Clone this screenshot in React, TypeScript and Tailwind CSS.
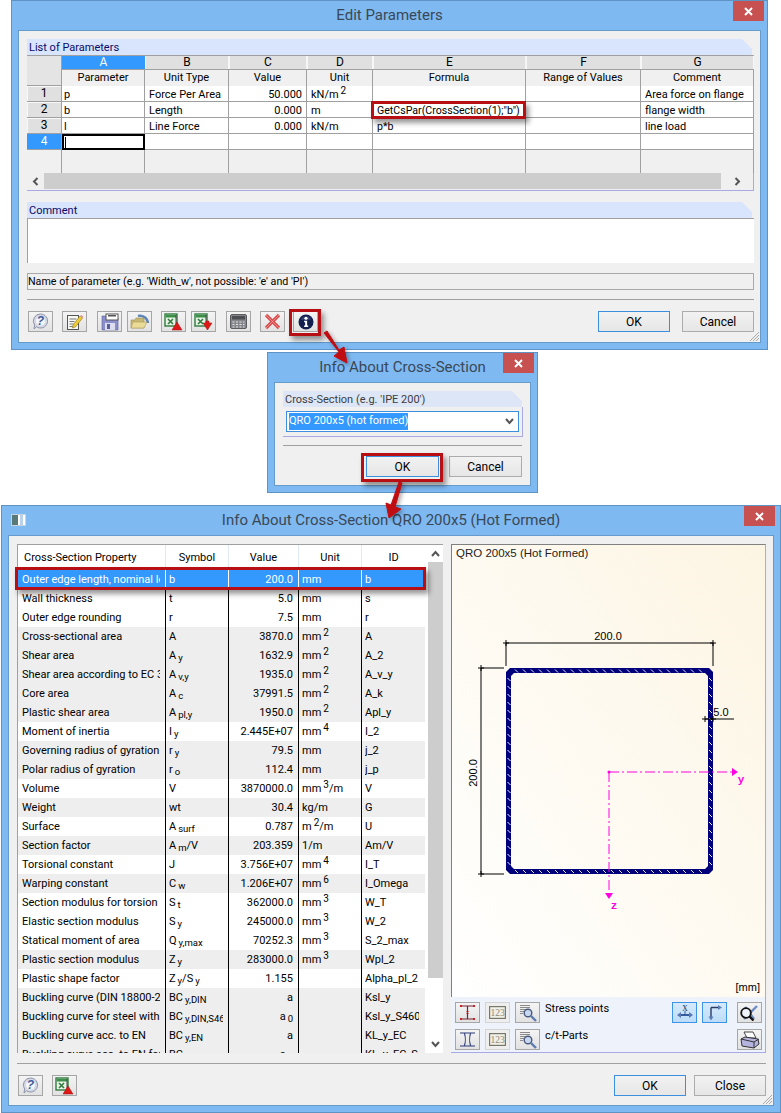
import React from 'react';

const Sb = ({ children }: { children: React.ReactNode }) => (
  <span className="ml-[2px] text-[9.5px] leading-[0] align-[-2px]">{children}</span>
);
const Sp = ({ children }: { children: React.ReactNode }) => (
  <span className="ml-[2px] text-[10px] leading-[0] align-[4px]">{children}</span>
);

const ToolIcon = ({ name }: { name: string }) => {
  switch (name) {
    case 'help':
      return (
        <svg width="17" height="17" viewBox="0 0 17 17">
          <path d="M8.5 1a7 7 0 1 1-4 12.7L2 16l.6-4A7 7 0 0 1 8.5 1z" fill="#d5d9e6" stroke="#8d93a8" />
          <circle cx="8.5" cy="8" r="4.6" fill="#f4f5fa" />
          <text x="8.5" y="12" textAnchor="middle" fontSize="12" fontWeight="700" fontStyle="italic" fill="#3d5c9c" fontFamily="Liberation Sans">?</text>
        </svg>
      );
    case 'edit':
      return (
        <svg width="18" height="18" viewBox="0 0 18 18">
          <rect x="1.5" y="2.5" width="11" height="14" fill="#f8f8f4" stroke="#555" />
          <path d="M3.500 6h7M3.500 8.500h5M3.500 11h4M3.500 13.500h6" stroke="#777" />
          <path d="M7 12 14 3l2.500 2-7 9-3 1z" fill="#f0cd30" stroke="#8a7420" strokeWidth=".6" />
          <path d="M14 3l2.500 2 1-1.500L15.500 2z" fill="#e49aa0" />
        </svg>
      );
    case 'save':
      return (
        <svg width="18" height="18" viewBox="0 0 18 18">
          <path d="M1 3h14l2 2v12H1z" fill="#8a90cc" stroke="#5a5f9a" strokeWidth=".6" />
          <rect x="5" y="1" width="12" height="6" fill="#fff" stroke="#555" />
          <rect x="7" y="2" width="8" height="1.500" fill="#555" />
          <rect x="4" y="10" width="10" height="7" fill="#dcdef0" />
          <rect x="6" y="11" width="3" height="5" fill="#5a5f9a" />
        </svg>
      );
    case 'open':
      return (
        <svg width="20" height="18" viewBox="0 0 20 18">
          <path d="M8 3a8 8 0 0 1 10 7" fill="none" stroke="#5f86b8" strokeWidth="2.500" />
          <path d="M1 7h4l1-2h8v10H1z" fill="#c9b874" stroke="#9d9050" strokeWidth=".6" />
          <path d="M1 15 3 9h14l-3 6z" fill="#eadb96" stroke="#a89a5a" strokeWidth=".6" />
        </svg>
      );
    case 'xlsup':
    case 'xlsdown':
      return (
        <svg width="19" height="18" viewBox="0 0 19 18">
          <rect x="1" y="1" width="12" height="12" fill="#e8f2e6" stroke="#2f7d3d" strokeWidth="1.400" />
          <rect x="2" y="2" width="10" height="2.500" fill="#3b8f48" />
          <path d="M4 6l5 5M9 6l-5 5" stroke="#2f7d3d" strokeWidth="1.600" />
          <path d="M12 2v12" stroke="#444" />
          {name === 'xlsup' ? (
            <path d="M13 9l5 8H8z" fill="#e01818" stroke="#9a1010" strokeWidth=".5" />
          ) : (
            <path d="M9 10h3V8h3v2h3l-4.500 7z" fill="#e01818" stroke="#9a1010" strokeWidth=".5" />
          )}
        </svg>
      );
    case 'calc':
      return (
        <svg width="17" height="15" viewBox="0 0 17 15">
          <rect x=".5" y=".5" width="16" height="14" rx="1.500" fill="#85878c" stroke="#5a5c60" />
          <rect x="2" y="2" width="13" height="3.500" fill="#4c4e54" />
          <path d="M2.500 8h2M6 8h2M9.500 8h2M13 8h1.500M2.500 10.500h2M6 10.500h2M9.500 10.500h2M13 10.500h1.500M2.500 13h2M6 13h2M9.500 13h2M13 13h1.500" stroke="#e4e4e4" strokeWidth="1.200" />
        </svg>
      );
    case 'del':
      return (
        <svg width="17" height="17" viewBox="0 0 17 17">
          <path d="M2 2l13 13M15 2 2 15" stroke="#dc4a4a" strokeWidth="3.200" />
          <path d="M2 2l13 13M15 2 2 15" stroke="#f4a0a0" strokeWidth=".8" />
        </svg>
      );
    case 'info':
      return (
        <svg width="16" height="16" viewBox="0 0 17 17">
          <circle cx="8.500" cy="8.500" r="8" fill="#141f4e" />
          <path d="M3 6a6 6 0 0 1 11 0z" fill="#4a5a8e" opacity=".55" />
          <circle cx="8.500" cy="4.500" r="1.700" fill="#fff" />
          <path d="M6.500 7.200h3.200v5h1.100v1.500H6.500v-1.500h1.100V8.700H6.500z" fill="#fff" />
        </svg>
      );
    case 'stress':
      return (
        <svg width="17" height="17" viewBox="0 0 17 17">
          <path d="M2 2h13M2 15h13M8.500 2v13" stroke="#7a2030" strokeWidth="1.200" />
          <path d="M1 1l2 2M3 1 1 3M14 1l2 2M16 1l-2 2M1 14l2 2M3 14l-2 2M14 14l2 2M16 14l-2 2M7.500 7.500l2 2M9.500 7.500l-2 2" stroke="#d02020" />
        </svg>
      );
    case 'num':
      return (
        <svg width="17" height="13" viewBox="0 0 17 13">
          <rect x=".5" y=".5" width="16" height="12" fill="#f0f0e8" stroke="#77776a" strokeWidth="1.400" />
          <text x="8.500" y="10" textAnchor="middle" fontSize="9.500" fill="#8a8a7a" fontFamily="Liberation Serif">123</text>
        </svg>
      );
    case 'section':
      return (
        <svg width="17" height="17" viewBox="0 0 17 17">
          <path d="M1 2h15M1 15h15M5.500 2.500c1 3 1 9 0 12M11.500 2.500c-1 3-1 9 0 12" fill="none" stroke="#2c3a78" strokeWidth="1.100" />
        </svg>
      );
    case 'mag':
      return (
        <svg width="18" height="18" viewBox="0 0 18 18">
          <path d="M1 1.500h10M1 3.500h10M1 5.500h6M1 7.500h4M1 9.500h3" stroke="#8a8a8a" />
          <circle cx="9" cy="9" r="3.800" fill="#c8d8f0" stroke="#4a5a7c" strokeWidth="1.400" />
          <path d="m12 12 5 5" stroke="#5a7cb0" strokeWidth="2.400" />
        </svg>
      );
    case 'xaxis':
      return (
        <svg width="18" height="17" viewBox="0 0 18 17">
          <text x="9" y="6.500" textAnchor="middle" fontSize="7.500" fill="#223" fontFamily="Liberation Serif">X</text>
          <path d="M2 11h14" stroke="#345a9c" strokeWidth="2" />
          <path d="M9 7v3" stroke="#345a9c" />
          <path d="M1 11l4-3v6zM17 11l-4-3v6z" fill="#5c7cb8" />
        </svg>
      );
    case 'axes':
      return (
        <svg width="17" height="17" viewBox="0 0 17 17">
          <path d="M5 3.500h9M5 3.500v11" stroke="#2c3a62" strokeWidth="1.400" />
          <path d="M16 3.500l-4-2.500v5zM5 16.500l-2.500-4h5z" fill="#5c7cb8" />
        </svg>
      );
    case 'view':
      return (
        <svg width="21" height="18" viewBox="0 0 21 18">
          <path d="M5 15 18 2M15 15 6 3" stroke="#6d8bc4" strokeWidth="2.400" />
          <circle cx="7" cy="9" r="4.800" fill="#eef2fa" stroke="#111" strokeWidth="1.800" />
          <path d="m10.500 12.500 4 4" stroke="#111" strokeWidth="2.400" />
        </svg>
      );
    case 'print':
      return (
        <svg width="20" height="18" viewBox="0 0 20 18">
          <path d="M4 1h9l3 6H7z" fill="#fff" stroke="#444" />
          <path d="M1 8l4-2 13 2 1 5-5 4-12-2z" fill="#b4b4de" stroke="#333" />
          <path d="M1 8l13 3v6M14 11l5-3" fill="none" stroke="#333" />
        </svg>
      );
    default:
      return null;
  }
};

const ToolBtn = ({ icon, active, dim }: { icon: string; active?: boolean; dim?: boolean }) => (
  <div
    className={
      active
        ? 'flex h-[21px] w-[25px] shrink-0 items-center justify-center border border-[#3d94e6] bg-gradient-to-b from-[#d6eafc] to-[#bcdcf8]'
        : dim
          ? 'flex h-[21px] w-[25px] shrink-0 items-center justify-center border border-[#d4d4d4] bg-[#eeeeee]'
          : 'flex h-[21px] w-[25px] shrink-0 items-center justify-center border border-[#a6a6a6] bg-gradient-to-b from-[#f4f4f4] to-[#e2e2e2]'
    }
  >
    <ToolIcon name={icon} />
  </div>
);

const DlgBtn = ({ label, primary, w }: { label: string; primary?: boolean; w: string }) => (
  <div
    className={
      (primary ? 'border-[#3c8fdf] ' : 'border-[#acacac] ') +
      w +
      ' flex h-[21px] items-center justify-center border bg-gradient-to-b from-[#f2f2f2] to-[#e6e6e6] text-[12px] text-black'
    }
  >
    {label}
  </div>
);

const Win = ({ title, className, children, icon, closeClass }: { title: string; className: string; children: React.ReactNode; icon?: boolean; closeClass?: string }) => (
  <div className={className + ' flex flex-col border border-[#5f93c4] bg-[#7eb9f2]'}>
    <div className="relative flex h-[29px] shrink-0 items-center justify-center text-[15px] text-[#3a4856]">
      {icon && (
        <div className="absolute left-[9px] top-[8px] flex h-[12px] w-[15px] border border-[#c8d4e0] bg-white">
          <div className="w-[6px] bg-[#5a7a7a]" />
          <div className="ml-[2px] w-[3px] bg-[#b8d0e8]" />
        </div>
      )}
      {title}
      <div className={(closeClass ?? 'right-[3px]') + ' absolute top-0 flex h-[20px] w-[31px] items-center justify-center bg-[#c75050]'}>
        <svg width="9" height="9" viewBox="0 0 9 9">
          <path d="M1 1l7 7M8 1 1 8" stroke="#fff" strokeWidth="2" />
        </svg>
      </div>
    </div>
    <div className="relative mx-[6px] mb-[6px] flex min-h-0 flex-1 flex-col border border-[#659ac9] bg-[#f0f0f0]">
      {children}
    </div>
  </div>
);

const Grip = () => (
  <svg className="absolute bottom-0 right-0" width="12" height="12" viewBox="0 0 12 12">
    <path d="M11 2 2 11M11 5l-6 6M11 8l-3 3" stroke="#a8a8a8" />
  </svg>
);

const paramColsClass = 'grid grid-cols-[35px_83px_84px_78px_66px_153px_115px_113px]';

const paramRows: { n: string; a: string; b: string; c: string; d: React.ReactNode; e: string; g: string }[] = [
  { n: '1', a: 'p', b: 'Force Per Area', c: '50.000', d: <>kN/m<Sp>2</Sp></>, e: '', g: 'Area force on flange' },
  { n: '2', a: 'b', b: 'Length', c: '0.000', d: 'm', e: 'GetCsPar(CrossSection(1);"b")', g: 'flange width' },
  { n: '3', a: 'l', b: 'Line Force', c: '0.000', d: 'kN/m', e: 'p*b', g: 'line load' },
];

const ParamTable = () => (
  <div className="relative">
    <div className={paramColsClass + ' h-[14px] border-t border-[#a0a0a0] bg-[#f0f0f0] text-center text-[12px] leading-[13px]'}>
      <div className="row-span-2 h-[30px] border-b border-r border-[#a0a0a0] bg-[#e4e4e4]" />
      <div className="bg-[#3399ff] text-white">A</div>
      {['B', 'C', 'D', 'E', 'F', 'G'].map((l) => (
        <div key={l} className="border-l border-r border-[#f6f6f6] bg-[#e0e0e0] text-black">{l}</div>
      ))}
    </div>
    <div className={paramColsClass + ' h-[17px] text-center leading-[16px]'}>
      <div />
      {['Parameter', 'Unit Type', 'Value', 'Unit', 'Formula', 'Range of Values', 'Comment'].map((l) => (
        <div key={l} className="border-b border-r border-t border-[#a0a0a0] bg-[#f0f0f0]">{l}</div>
      ))}
    </div>
    {paramRows.map((r) => (
      <div key={r.n} className={paramColsClass + ' h-[16px] grid-rows-[16px] whitespace-nowrap leading-[17px]'}>
        <div className="border-b border-r border-[#a0a0a0] bg-[#e0e0e0] text-center text-[12px] leading-[15px] shadow-[inset_1px_1px_0_#f8f8f8]">{r.n}</div>
        <div className="border-b border-r border-[#a0a0a0] bg-white pl-[2px]">{r.a}</div>
        <div className="border-b border-r border-[#a0a0a0] bg-white pl-[4px]">{r.b}</div>
        <div className="border-b border-r border-[#a0a0a0] bg-white pr-[4px] text-right">{r.c}</div>
        <div className="border-b border-r border-[#a0a0a0] bg-white pl-[4px]">{r.d}</div>
        <div className="border-b border-r border-[#a0a0a0] bg-white pl-[4px] text-[10.6px]">{r.e}</div>
        <div className="border-b border-r border-[#a0a0a0] bg-white" />
        <div className="border-b border-r border-[#a0a0a0] bg-white pl-[4px]">{r.g}</div>
      </div>
    ))}
    <div className={paramColsClass + ' h-[16px] grid-rows-[16px] leading-[15px]'}>
      <div className="border-b border-r border-[#a0a0a0] bg-[#3399ff] text-center text-[12px] text-white">4</div>
      <div className="flex items-center border-2 border-black bg-white pl-[1px]">
        <div className="h-[11px] w-[1px] bg-black" />
      </div>
      {[0, 1, 2, 3, 4, 5].map((i) => (
        <div key={i} className="border-b border-r border-[#a0a0a0] bg-white" />
      ))}
    </div>
    <div className={paramColsClass + ' h-[23px]'}>
      {[0, 1, 2, 3, 4, 5, 6, 7].map((i) => (
        <div key={i} className="border-r border-[#a0a0a0] bg-[#f0f0f0]" />
      ))}
    </div>
    <div className="flex h-[16px] items-stretch bg-[#f0f0f0]">
      <div className="flex w-[17px] items-center justify-center">
        <svg width="7" height="9" viewBox="0 0 7 9"><path d="M5.500 1 2 4.500 5.500 8" fill="none" stroke="#555" strokeWidth="2" /></svg>
      </div>
      <div className="w-[677px] bg-[#cdcdcd]" />
      <div className="flex flex-1 items-center justify-center">
        <svg width="7" height="9" viewBox="0 0 7 9"><path d="M1.500 1 5 4.500 1.500 8" fill="none" stroke="#555" strokeWidth="2" /></svg>
      </div>
    </div>
  </div>
);

const GroupHead = ({ label, dim }: { label: string; dim?: boolean }) => (
  <div
    className={
      (dim ? 'bg-[#dde6f6] text-[#3c3c3c] ' : 'bg-[#d8e5fc] text-[#0a0a6a] ') +
      "h-[16px] pl-[2px] leading-[17px] [clip-path:polygon(0_0,calc(100%-10px)_0,100%_10px,100%_100%,0_100%)]"
    }
  >
    {label}
  </div>
);

const EditParameters = () => (
  <Win title="Edit Parameters" className="ml-[11px] h-[350px] w-[757px] shrink-0">
    <div className="px-[8px] pt-[8px]">
      <GroupHead label="List of Parameters" />
      <div className="w-[727px] border-b border-r border-[#a9a9e6] pb-[1px]">
        <ParamTable />
      </div>
      <div className="mt-[11px]">
        <GroupHead label="Comment" />
        <div className="h-[45px] w-[727px] border-l border-t border-[#a0a0a0] bg-white" />
      </div>
      <div className="mt-[10px] h-[17px] w-[727px] border border-[#a8a8a8] text-[10.7px] leading-[16px]">
        Name of parameter (e.g. 'Width_w', not possible: 'e' and 'PI')
      </div>
      <div className="mt-[9px] h-px w-[727px] bg-[#a0a0a0]" />
      <div className="mt-[11px] flex w-[727px] items-center">
        <div className="ml-[1px] flex items-center">
          <ToolBtn icon="help" />
          <div className="ml-[9px]"><ToolBtn icon="edit" /></div>
          <div className="ml-[10px]"><ToolBtn icon="save" /></div>
          <div className="ml-[5px]"><ToolBtn icon="open" /></div>
          <div className="ml-[9px]"><ToolBtn icon="xlsup" /></div>
          <div className="ml-[5px]"><ToolBtn icon="xlsdown" /></div>
          <div className="ml-[10px]"><ToolBtn icon="calc" /></div>
          <div className="ml-[9px]"><ToolBtn icon="del" /></div>
          <div className="ml-[8px]"><ToolBtn icon="info" /></div>
        </div>
        <div className="ml-auto flex gap-[12px]">
          <DlgBtn label="OK" primary w="w-[72px]" />
          <DlgBtn label="Cancel" w="w-[72px]" />
        </div>
      </div>
    </div>
    <Grip />
  </Win>
);

const InfoSmall = () => (
  <Win title="Info About Cross-Section" className="ml-[267px] mt-[2px] h-[141px] w-[271px] shrink-0">
    <div className="px-[8px] pt-[8px]">
      <GroupHead label="Cross-Section (e.g. 'IPE 200')" dim />
      <div className="h-[30px] w-[240px] border-b border-r border-[#a9a9e6] pl-[3px] pt-[4px]">
        <div className="flex h-[21px] w-[233px] items-center border border-[#3c8fdf] bg-white pl-[2px]">
          <span className="bg-[#3399ff] text-white">QRO 200x5 (hot formed)</span>
          <svg className="ml-auto mr-[4px]" width="9" height="7" viewBox="0 0 9 7"><path d="M1 1l3.500 4L8 1" fill="none" stroke="#555" strokeWidth="2" /></svg>
        </div>
      </div>
      <div className="mt-[8px] h-px w-[239px] bg-[#a0a0a0]" />
      <div className="mt-[10px] flex w-[239px] justify-end gap-[10px]">
        <DlgBtn label="OK" primary w="w-[73px]" />
        <DlgBtn label="Cancel" w="w-[73px]" />
      </div>
    </div>
  </Win>
);

type PropRow = { p: string; s: React.ReactNode; v: React.ReactNode; u?: React.ReactNode; id: string };

const propRows: PropRow[] = [
  { p: 'Outer edge length, nominal length', s: 'b', v: '200.0', u: 'mm', id: 'b' },
  { p: 'Wall thickness', s: 't', v: '5.0', u: 'mm', id: 's' },
  { p: 'Outer edge rounding', s: 'r', v: '7.5', u: 'mm', id: 'r' },
  { p: 'Cross-sectional area', s: 'A', v: '3870.0', u: <>mm<Sp>2</Sp></>, id: 'A' },
  { p: 'Shear area', s: <>A<Sb>y</Sb></>, v: '1632.9', u: <>mm<Sp>2</Sp></>, id: 'A_2' },
  { p: 'Shear area according to EC 3', s: <>A<Sb>v,y</Sb></>, v: '1935.0', u: <>mm<Sp>2</Sp></>, id: 'A_v_y' },
  { p: 'Core area', s: <>A<Sb>c</Sb></>, v: '37991.5', u: <>mm<Sp>2</Sp></>, id: 'A_k' },
  { p: 'Plastic shear area', s: <>A<Sb>pl,y</Sb></>, v: '1950.0', u: <>mm<Sp>2</Sp></>, id: 'Apl_y' },
  { p: 'Moment of inertia', s: <>I<Sb>y</Sb></>, v: '2.445E+07', u: <>mm<Sp>4</Sp></>, id: 'I_2' },
  { p: 'Governing radius of gyration', s: <>r<Sb>y</Sb></>, v: '79.5', u: 'mm', id: 'j_2' },
  { p: 'Polar radius of gyration', s: <>r<Sb>o</Sb></>, v: '112.4', u: 'mm', id: 'j_p' },
  { p: 'Volume', s: 'V', v: '3870000.0', u: <>mm<Sp>3</Sp>/m</>, id: 'V' },
  { p: 'Weight', s: 'wt', v: '30.4', u: 'kg/m', id: 'G' },
  { p: 'Surface', s: <>A<Sb>surf</Sb></>, v: '0.787', u: <>m<Sp>2</Sp>/m</>, id: 'U' },
  { p: 'Section factor', s: <>A<Sb>m</Sb>/V</>, v: '203.359', u: '1/m', id: 'Am/V' },
  { p: 'Torsional constant', s: 'J', v: '3.756E+07', u: <>mm<Sp>4</Sp></>, id: 'I_T' },
  { p: 'Warping constant', s: <>C<Sb>w</Sb></>, v: '1.206E+07', u: <>mm<Sp>6</Sp></>, id: 'I_Omega' },
  { p: 'Section modulus for torsion', s: <>S<Sb>t</Sb></>, v: '362000.0', u: <>mm<Sp>3</Sp></>, id: 'W_T' },
  { p: 'Elastic section modulus', s: <>S<Sb>y</Sb></>, v: '245000.0', u: <>mm<Sp>3</Sp></>, id: 'W_2' },
  { p: 'Statical moment of area', s: <>Q<Sb>y,max</Sb></>, v: '70252.3', u: <>mm<Sp>3</Sp></>, id: 'S_2_max' },
  { p: 'Plastic section modulus', s: <>Z<Sb>y</Sb></>, v: '283000.0', u: <>mm<Sp>3</Sp></>, id: 'Wpl_2' },
  { p: 'Plastic shape factor', s: <>Z<Sb>y</Sb>/S<Sb>y</Sb></>, v: '1.155', id: 'Alpha_pl_2' },
  { p: 'Buckling curve (DIN 18800-2: 1990)', s: <>BC<Sb>y,DIN</Sb></>, v: 'a', id: 'Ksl_y' },
  { p: 'Buckling curve for steel with fy', s: <>BC<Sb>y,DIN,S460</Sb></>, v: <>a<Sb>0</Sb></>, id: 'Ksl_y_S460' },
  { p: 'Buckling curve acc. to EN', s: <>BC<Sb>y,EN</Sb></>, v: 'a', id: 'KL_y_EC' },
  { p: 'Buckling curve acc. to EN for S460', s: <>BC<Sb>y,EN,S460</Sb></>, v: <>a<Sb>0</Sb></>, id: 'KL_y_EC_S460' },
];

const grayRows = [3, 4, 5, 6, 7, 9, 10, 12, 14, 16, 20, 22, 23, 24, 25];
const propColsClass = 'grid grid-cols-[148px_63px_70px_63px_63px]';

const PropTable = () => (
  <div className="flex h-[509px] w-[427px] border-l border-t border-[#a0a0a0] bg-white">
    <div className="w-[407px] overflow-hidden">
      <div className={propColsClass + ' h-[25px] whitespace-nowrap text-center leading-[25px]'}>
        <div className="border-r border-[#e0e8f4] pl-[6px] text-left">Cross-Section Property</div>
        <div className="border-r border-[#e0e8f4]">Symbol</div>
        <div className="border-r border-[#e0e8f4]">Value</div>
        <div className="border-r border-[#e0e8f4]">Unit</div>
        <div>ID</div>
      </div>
      {propRows.map((r, i) => {
        const sel = i === 0;
        const gray = grayRows.includes(i);
        const line = sel ? 'border-r border-white ' : 'border-r border-black ';
        return (
          <div
            key={r.id}
            className={
              (sel ? 'bg-[#3399ff] text-white ' : gray ? 'bg-[#eeeeee] text-black ' : 'bg-white text-black ') +
              propColsClass +
              ' h-[19px] whitespace-nowrap leading-[19px]'
            }
          >
            <div className={line + 'pl-[4px] pr-[5px]'}><div className="overflow-hidden">{r.p}</div></div>
            <div className={line + 'pl-[3px] pr-[5px]'}><div className="overflow-hidden">{r.s}</div></div>
            <div className={line + 'pr-[5px] text-right'}>{r.v}</div>
            <div className={line + 'pl-[3px]'}>{r.u}</div>
            <div className="pl-[3px] pr-[6px]"><div className="overflow-hidden">{r.id}</div></div>
          </div>
        );
      })}
    </div>
    <div className="ml-[3px] flex w-[15px] flex-col">
      <div className="flex h-[17px] items-center justify-center">
        <svg width="9" height="7" viewBox="0 0 9 7"><path d="M1 6l3.500-4L8 6" fill="none" stroke="#555" strokeWidth="2" /></svg>
      </div>
      <div className="h-[416px] bg-[#cdcdcd]" />
      <div className="mt-auto flex h-[17px] items-center justify-center">
        <svg width="9" height="7" viewBox="0 0 9 7"><path d="M1 1l3.500 4L8 1" fill="none" stroke="#555" strokeWidth="2" /></svg>
      </div>
    </div>
  </div>
);

// little white hatch ticks along the four walls of the tube
const hatchTicks = () => {
  let d = '';
  for (let x = 64; x < 256; x += 8) d += `M${x} 125.500l3 3M${x} 326l3 3`;
  for (let y = 134; y < 322; y += 8) d += `M56.500 ${y}l3 3M258 ${y}l3 3`;
  return d;
};

const SectionDrawing = () => {
  const outer = 'M59 124H258L262 128V326L258 330H59L55 326V128Z';
  const inner = 'M63 129H254L257 132V322L254 325H63L60 322V132Z';
  return (
    <svg className="block" width="313" height="452" viewBox="0 0 313 452">
      <defs>
        <linearGradient id="cream" x1="0" y1="1" x2="1" y2="0">
          <stop offset="0" stopColor="#ffffff" />
          <stop offset="1" stopColor="#fdf5e3" />
        </linearGradient>
      </defs>
      <rect width="313" height="452" fill="url(#cream)" />
      <text x="4" y="12" fontSize="11.500" fill="#222" fontFamily="Liberation Sans">QRO 200x5 (Hot Formed)</text>
      <g transform="translate(-1 -1)">
        <path d={outer + inner} fill="#00007c" fillRule="evenodd" />
        <path d={hatchTicks()} stroke="#e4e6f6" fill="none" />
        <path d="M55 99H262M55 99V122M262 99V122M30 124V330M30 124H53M30 330H53M254 175H283" stroke="#000" fill="none" />
        <path d="M52 99h6M55 96v6M259 99h6M262 96v6M27 124h6M30 121v6M27 330h6M30 327v6M251 175h6M254 172v6M259 175h6M262 172v6" stroke="#000" />
        <text x="157" y="96" textAnchor="middle" fontSize="11" fill="#000" fontFamily="Liberation Sans">200.0</text>
        <text x="270" y="172" textAnchor="middle" fontSize="11" fill="#000" fontFamily="Liberation Sans">5.0</text>
        <text x="0" y="0" transform="translate(26 229) rotate(-90)" textAnchor="middle" fontSize="11" fill="#000" fontFamily="Liberation Sans">200.0</text>
        <path d="M158 228H281M158 228V349" stroke="#ff00e0" fill="none" strokeDasharray="10 3 2 3" />
        <path d="M281 224l6 4-6 4zM154 349h8l-4 6z" fill="#ff00e0" />
        <circle cx="158" cy="228" r="1.500" fill="#ff00e0" />
        <text x="290" y="239" textAnchor="middle" fontSize="11" fontWeight="700" fill="#ff00e0" fontFamily="Liberation Mono">y</text>
        <text x="163" y="365" textAnchor="middle" fontSize="11" fontWeight="700" fill="#ff00e0" fontFamily="Liberation Mono">z</text>
        <text x="309" y="447" textAnchor="end" fontSize="11" fill="#000" fontFamily="Liberation Sans">[mm]</text>
      </g>
    </svg>
  );
};

const SectionPanel = () => (
  <div className="flex h-[509px] w-[315px] flex-col border-r border-t border-r-[#a9a9e6] border-t-[#808080]">
    <div className="border-l border-[#808080]">
      <SectionDrawing />
    </div>
    <div className="flex flex-1 flex-col gap-[6px] border-b border-[#a9a9e6] bg-[#eef3fb] pl-[4px] pt-[5px] leading-[14px]">
      <div className="flex items-start gap-[5px] pr-[3px]">
        <ToolBtn icon="stress" />
        <ToolBtn icon="num" dim />
        <ToolBtn icon="mag" />
        <span>Stress points</span>
        <div className="ml-auto"><ToolBtn icon="xaxis" active /></div>
        <ToolBtn icon="axes" active />
        <div className="ml-[5px]"><ToolBtn icon="view" /></div>
      </div>
      <div className="flex items-start gap-[5px] pr-[3px]">
        <ToolBtn icon="section" />
        <ToolBtn icon="num" dim />
        <ToolBtn icon="mag" />
        <span>c/t-Parts</span>
        <div className="ml-auto"><ToolBtn icon="print" /></div>
      </div>
    </div>
  </div>
);

const InfoLarge = () => (
  <Win title="Info About Cross-Section QRO 200x5 (Hot Formed)" icon closeClass="right-[5px]" className="ml-[1px] mt-[12px] h-[608px] w-[780px] shrink-0">
    <div className="px-[8px] pt-[8px]">
      <div className="flex gap-[8px]">
        <PropTable />
        <SectionPanel />
      </div>
      <div className="mt-[10px] h-px w-[749px] bg-[#a0a0a0]" />
      <div className="mt-[11px] flex w-[749px] items-center pl-[1px]">
        <ToolBtn icon="help" />
        <div className="ml-[9px]"><ToolBtn icon="xlsup" /></div>
        <div className="ml-auto flex gap-[8px]">
          <DlgBtn label="OK" primary w="w-[72px]" />
          <DlgBtn label="Close" w="w-[72px]" />
        </div>
      </div>
    </div>
    <Grip />
  </Win>
);

const Callout = ({ className }: { className: string }) => (
  <div className={className + ' absolute border-[3px] border-[#b80f14] shadow-[3px_4px_5px_rgba(0,0,0,0.4)]'} />
);

const Arrow = ({ d }: { d: string }) => (
  <path d={d} fill="#c00d12" stroke="#c00d12" />
);

export default function App() {
  return (
    <div className="relative flex h-[1113px] w-[781px] flex-col overflow-hidden bg-white font-['Roboto',sans-serif] text-[11px] text-black">
      <EditParameters />
      <InfoSmall />
      <InfoLarge />

      {/* callouts */}
      <Callout className="left-[371px] top-[101px] h-[18px] w-[155px]" />
      <Callout className="left-[289px] top-[309px] h-[27px] w-[32px]" />
      <Callout className="left-[361px] top-[453px] h-[29px] w-[82px]" />
      <Callout className="left-[15px] top-[567px] h-[23px] w-[411px]" />
      <svg className="pointer-events-none absolute left-0 top-0" width="781" height="1113" viewBox="0 0 781 1113">
        <g style={{ filter: 'drop-shadow(2px 2px 2px rgba(0,0,0,0.35))' }}>
          <Arrow d="M324 333l3-2 12 19 5-3 3 16-13-7 5-4z" />
          <Arrow d="M399 482l3 1-7 24 6 2-12 9-3-15 5 2z" />
        </g>
      </svg>
    </div>
  );
}
